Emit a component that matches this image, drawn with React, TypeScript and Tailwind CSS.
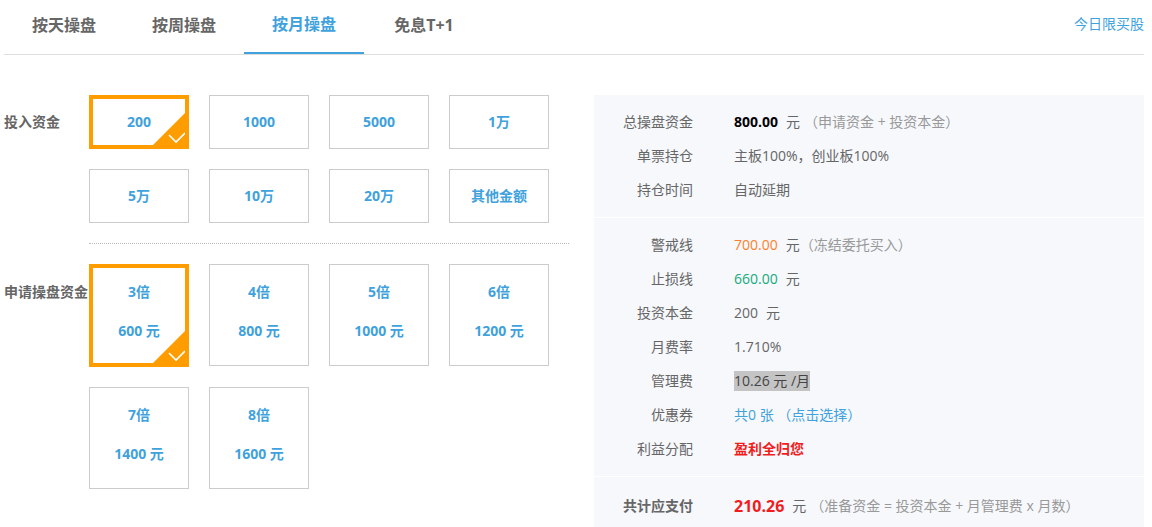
const tabs = ["按天操盘", "按周操盘", "按月操盘", "免息T+1"];

const amounts = ["200", "1000", "5000", "1万", "5万", "10万", "20万", "其他金额"];

const multiples = [
  ["3倍", "600 元"],
  ["4倍", "800 元"],
  ["5倍", "1000 元"],
  ["6倍", "1200 元"],
  ["7倍", "1400 元"],
  ["8倍", "1600 元"],
];

const Corner = () => (
  <div className="absolute right-0 bottom-0 w-[32px] h-[32px] bg-[#ff9c00] [clip-path:polygon(100%_0,100%_100%,0_100%)]">
    <svg className="absolute right-[-2px] bottom-[1px]" width="20" height="14" viewBox="0 0 20 14" fill="none">
      <path d="M2 5l7 7 9-9" stroke="#fff" strokeWidth="1.6" />
    </svg>
  </div>
);

const Row = ({ label, bold, children }: { label: string; bold?: boolean; children: React.ReactNode }) => (
  <div className="flex h-[34px] items-center">
    <div className={`w-[99px] text-right ${bold ? "font-bold" : ""}`}>{label}</div>
    <div className="ml-[41px] flex items-center">{children}</div>
  </div>
);

export default function App() {
  return (
    <div className="w-[1152px] h-[527px] overflow-hidden bg-white pl-1 pr-2 text-sm text-[#666] font-['Open_Sans','Noto_Sans_CJK_SC',sans-serif]">
      <div className="flex h-[55px] items-stretch border-b border-[#ddd]">
        {tabs.map((t, i) => (
          <div
            key={t}
            className={`w-[120px] h-[54px] pb-[4px] flex items-center justify-center text-base font-bold ${
              i === 2 ? "text-[#3fa2dd] border-b-2 border-[#3fa2dd]" : "text-[#666]"
            }`}
          >
            {t}
          </div>
        ))}
        <div className="ml-auto h-[54px] pb-[6px] flex items-center text-[#3fa2dd]">今日限买股</div>
      </div>

      <div className="flex mt-10">
        <div className="w-[590px]">
          <div className="flex">
            <div className="w-[85px] h-[54px] flex items-center font-bold">投入资金</div>
            <div className="grid grid-cols-[repeat(4,100px)] gap-5">
              {amounts.map((a, i) => (
                <div
                  key={a}
                  className={`relative h-[54px] flex items-center justify-center bg-white font-bold text-[#3fa2dd] ${
                    i === 0 ? "border-4 border-[#ff9c00]" : "border border-[#ccc]"
                  }`}
                >
                  {a}
                  {i === 0 && <Corner />}
                </div>
              ))}
            </div>
          </div>

          <div className="ml-[85px] w-[480px] my-5 border-t border-dotted border-[#bbb]" />

          <div className="flex">
            <div className="w-[85px] pt-[18px] font-bold whitespace-nowrap">申请操盘资金</div>
            <div className="grid grid-cols-[repeat(4,100px)] gap-5">
              {multiples.map(([m, v], i) => (
                <div
                  key={m}
                  className={`relative h-[102px] flex flex-col items-center bg-white font-bold text-[#3fa2dd] leading-[39px] ${
                    i === 0 ? "border-4 border-[#ff9c00] pt-[4px] h-[103px]" : "border border-[#ccc] pt-[7px]"
                  }`}
                >
                  <div>{m}</div>
                  <div>{v}</div>
                  {i === 0 && <Corner />}
                </div>
              ))}
            </div>
          </div>
        </div>

        <div className="w-[550px] h-[432px] bg-[#f6f8fc]">
          <div className="py-[10px] border-b border-white">
            <Row label="总操盘资金">
              <span className="font-bold text-black">800.00</span>
              <span className="ml-2">元</span>
              <span className="ml-1 text-[#999]">（申请资金 + 投资本金）</span>
            </Row>
            <Row label="单票持仓">主板100%，创业板100%</Row>
            <Row label="持仓时间">自动延期</Row>
          </div>
          <div className="py-[10px] border-b border-white">
            <Row label="警戒线">
              <span className="text-[#ff7f2a]">700.00</span>
              <span className="ml-2">元</span>
              <span className="text-[#999]">（冻结委托买入）</span>
            </Row>
            <Row label="止损线">
              <span className="text-[#16a97c]">660.00</span>
              <span className="ml-2">元</span>
            </Row>
            <Row label="投资本金">
              <span>200</span>
              <span className="ml-2">元</span>
            </Row>
            <Row label="月费率">1.710%</Row>
            <Row label="管理费">
              <span className="bg-[#c4c4c4] text-[#444] leading-[20px]">10.26 元 /月</span>
            </Row>
            <Row label="优惠券">
              <span className="text-[#3fa2dd] whitespace-pre">共0 张 （点击选择）</span>
            </Row>
            <Row label="利益分配">
              <span className="font-bold text-[#f21c1c]">盈利全归您</span>
            </Row>
          </div>
          <div className="pt-3">
            <Row label="共计应支付" bold>
              <span className="text-base font-bold text-[#f21c1c]">210.26</span>
              <span className="ml-2">元</span>
              <span className="ml-1 text-[#999]">（准备资金 = 投资本金 + 月管理费 x 月数）</span>
            </Row>
          </div>
        </div>
      </div>
    </div>
  );
}
